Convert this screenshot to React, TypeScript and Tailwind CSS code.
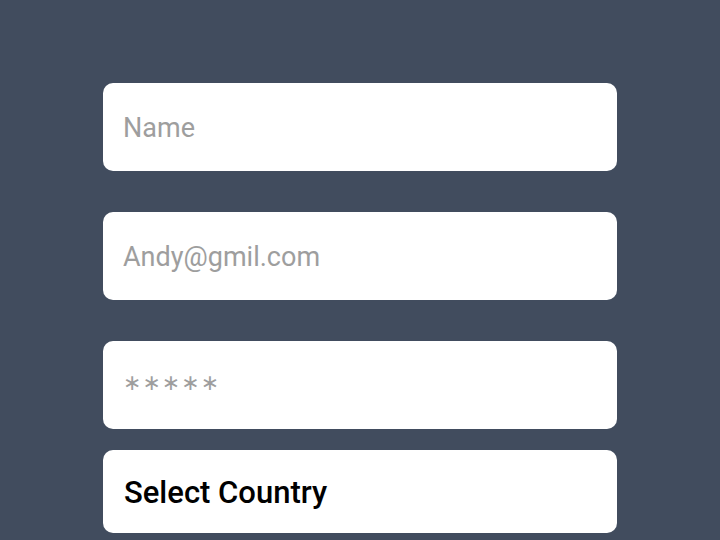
import React from 'react'

export default function App() {
  const box = "w-full h-[88px] rounded-[10px] bg-white px-5 text-black placeholder:text-[#9e9e9e] outline-none"

  return (
    <div className="w-[720px] h-[540px] overflow-hidden bg-[#414c5e] font-['Roboto',sans-serif]">
      <div className="w-[514px] ml-[103px] pt-[83px] flex flex-col">
        <input className={`${box} pt-[2px] text-[27px]`} placeholder="Name" />
        <input className={`${box} pt-[2px] mt-[41px] text-[27px]`} placeholder="Andy@gmil.com" />
        <input
          className={`${box} mt-[41px] pb-[6px] font-['DejaVu_Sans',sans-serif] text-[22px] tracking-[1px]`}
          placeholder="∗∗∗∗∗"
        />
        <div className="mt-[21px] h-[83px] rounded-[10px] bg-white px-[21px] pt-[4px] flex items-center">
          <span className="text-[31px] font-medium text-black">Select Country</span>
        </div>
      </div>
    </div>
  )
}
